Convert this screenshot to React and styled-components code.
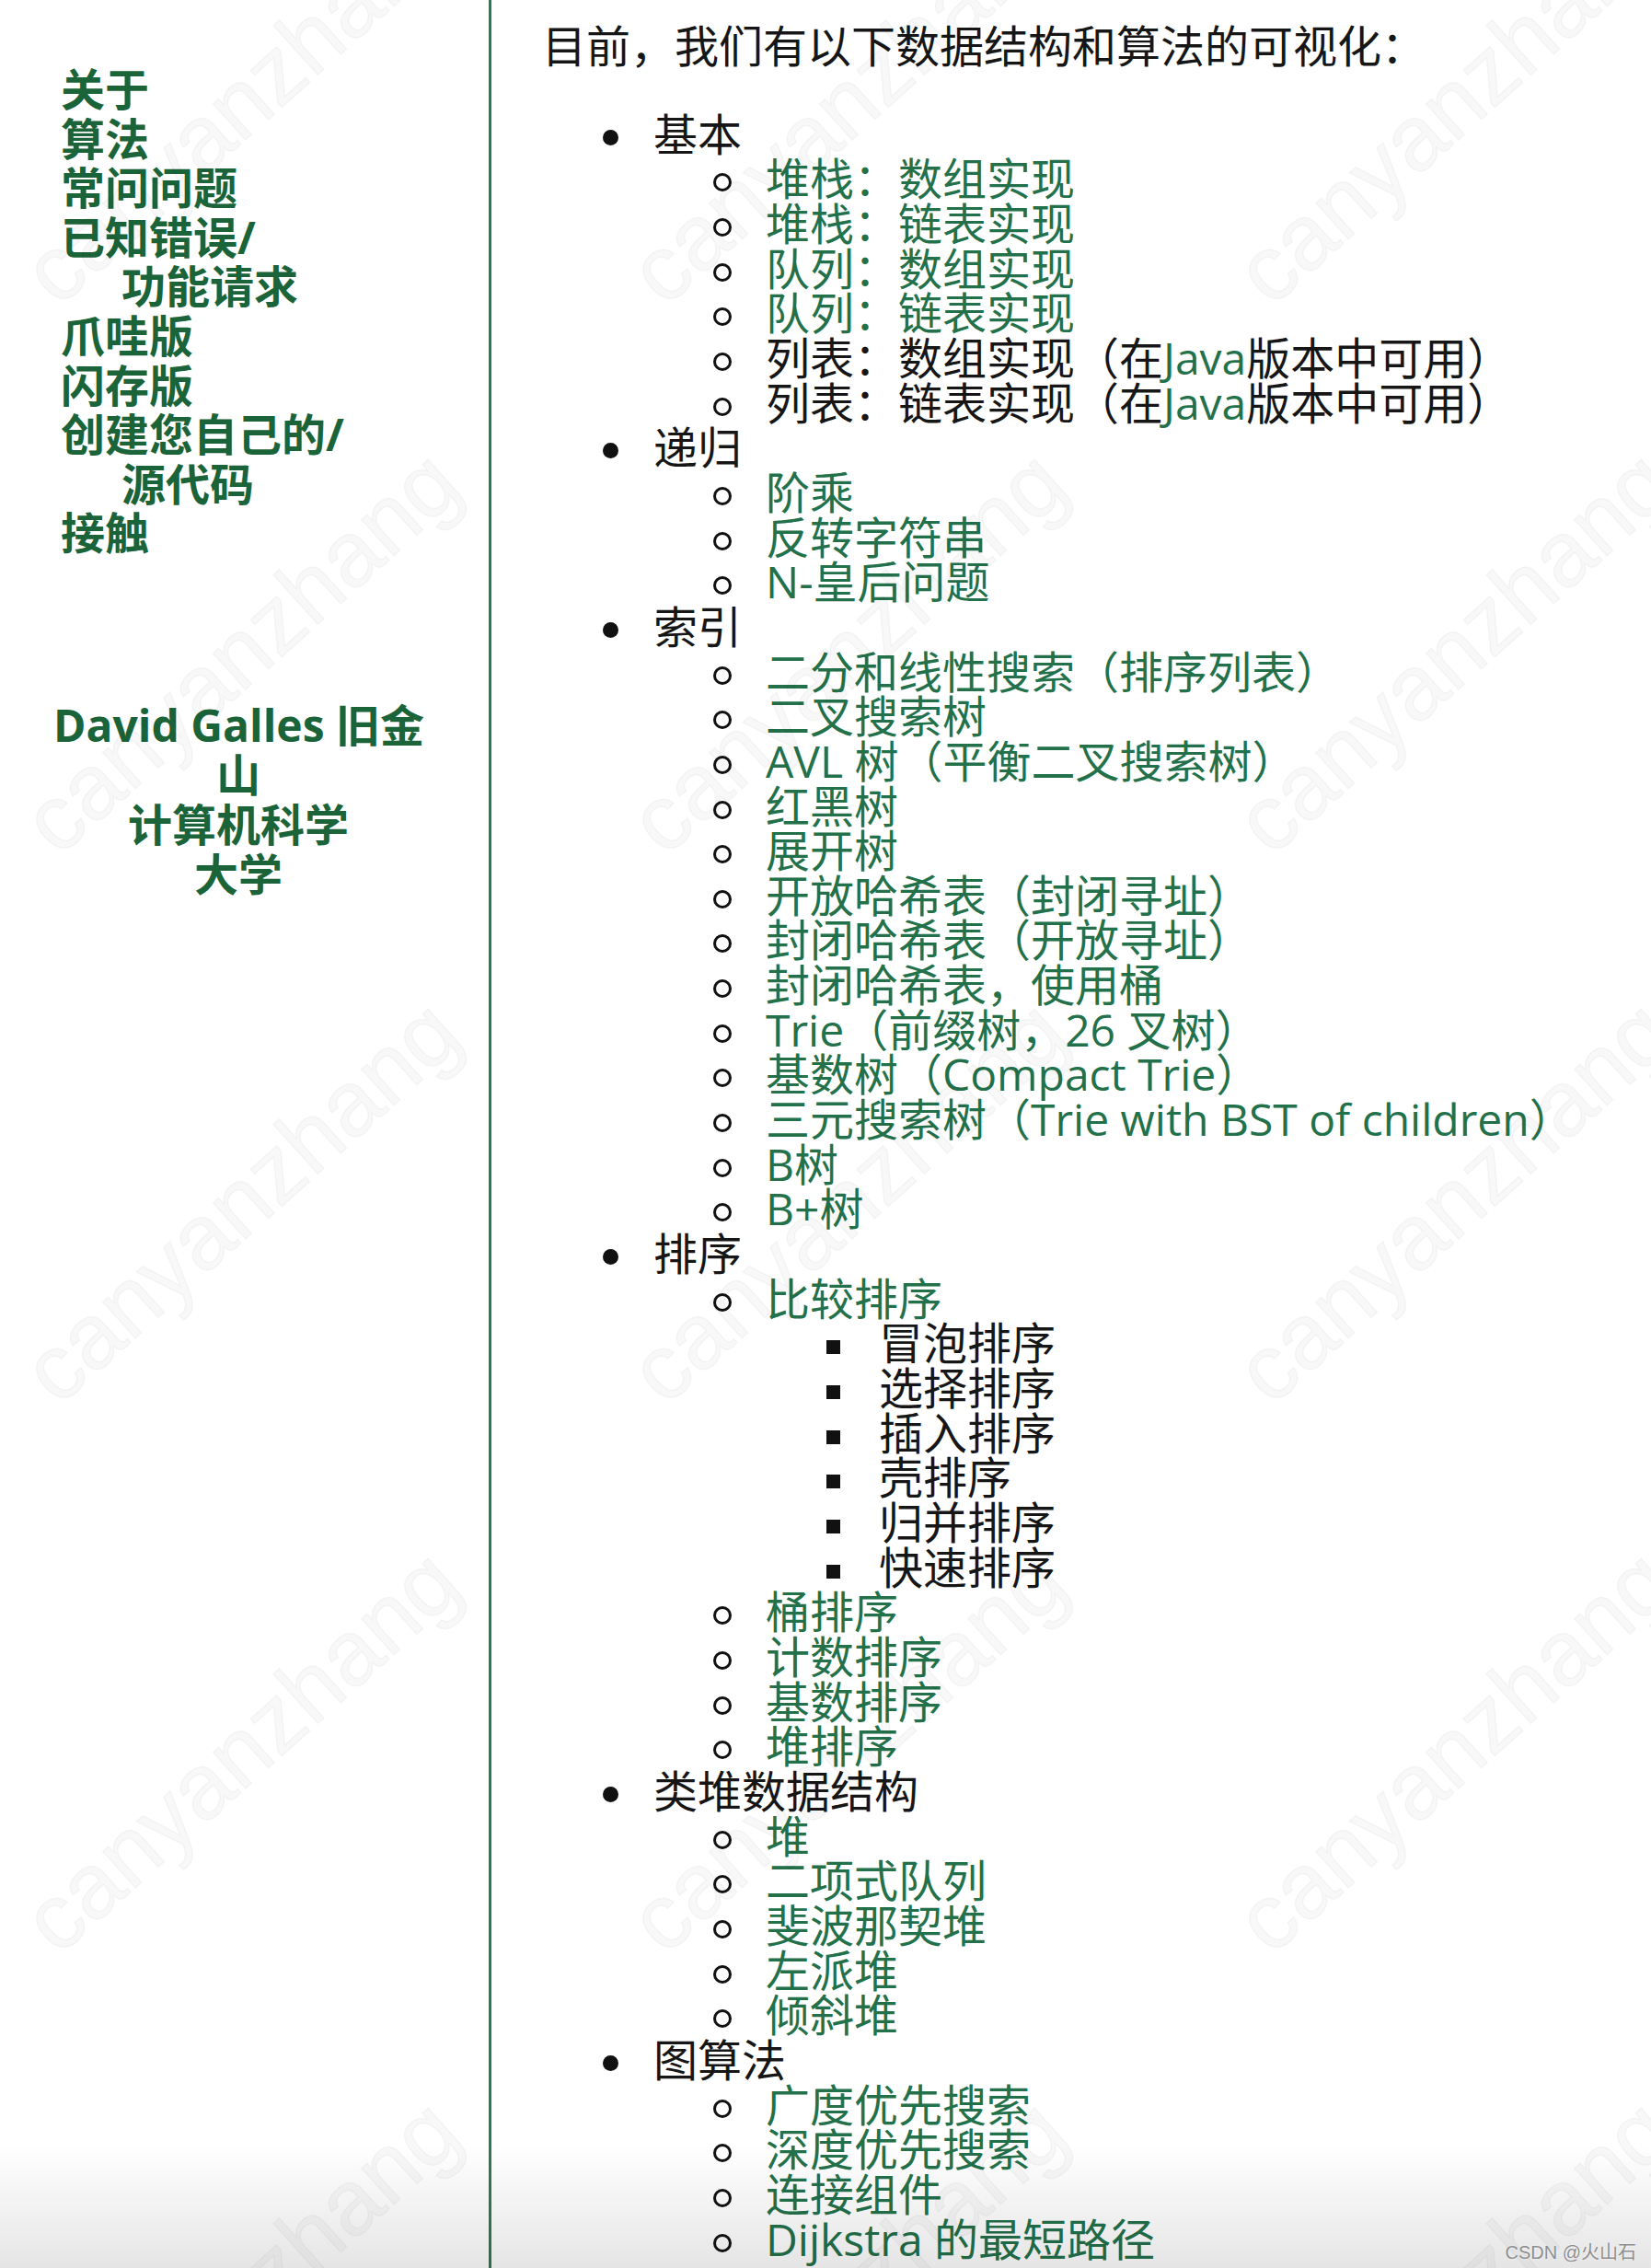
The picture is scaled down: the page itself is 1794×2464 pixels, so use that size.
import React from "react";
import styled, { createGlobalStyle } from "styled-components";

const GlobalStyle = createGlobalStyle`
  html, body { margin: 0; padding: 0; background: #ffffff; }
  body { font-family: "Open Sans", "Noto Sans CJK SC", sans-serif; }
`;

const NAV_GREEN = "#1b6439";
const LINK_GREEN = "#23714b";
const TEXT = "#161616";

const Page = styled.div`
  position: relative;
  display: flex;
  width: 1794px;
  height: 2464px;
  overflow: hidden;
  background: #fff;
`;

const Sidebar = styled.aside`
  flex: 0 0 531px;
  border-right: 3px solid #2c7a55;
  padding-top: 70px;
  box-sizing: content-box;
`;

const NavList = styled.nav`
  display: flex;
  flex-direction: column;
  padding-left: 66px;
`;

const NavLink = styled.a`
  display: block;
  color: ${NAV_GREEN};
  font-weight: 700;
  font-size: 48px;
  line-height: 53.6px;
  text-decoration: none;
  white-space: nowrap;
`;

const NavLine = styled.span`
  display: block;
  padding-left: ${(p) => (p.$cont ? "66px" : "0")};
`;

const Credit = styled.div`
  margin: 155px 0 0 58px;
  width: 402px;
  text-align: center;
  color: ${NAV_GREEN};
  font-weight: 700;
  font-size: 48px;
  line-height: 54px;
`;

const CreditLine = styled.span`
  display: block;
  white-space: nowrap;
`;

const Main = styled.main`
  flex: 1;
  padding: 26px 0 0 55px;
  color: ${TEXT};
  font-size: 48px;
  line-height: 48.66px;
`;

const Intro = styled.p`
  margin: 0 0 47px;
  white-space: nowrap;
`;

const List = styled.ul`
  list-style: none;
  margin: 0;
  padding-left: ${(p) => p.$indent}px;
`;

const markers = {
  disc: `
    width: 17px; height: 17px; border-radius: 50%;
    background: #111; left: -55.5px; top: 19px;
  `,
  circle: `
    width: 20px; height: 20px; border-radius: 50%;
    border: 3px solid #111; box-sizing: border-box;
    left: -57px; top: 18px;
  `,
  square: `
    width: 15px; height: 15px; background: #111;
    left: -57.5px; top: 21px;
  `,
};

const Item = styled.li`
  position: relative;
  white-space: nowrap;
  &::before {
    content: "";
    position: absolute;
    ${(p) => markers[p.$marker]}
  }
`;

const Link = styled.a`
  color: ${LINK_GREEN};
  text-decoration: none;
`;

const Plain = styled.span`
  color: ${TEXT};
`;

const WatermarkLayer = styled.div`
  position: absolute;
  top: -188px;
  left: -68px;
  display: grid;
  grid-template-columns: repeat(3, 659px);
  grid-auto-rows: 597px;
  pointer-events: none;
  z-index: 2;
`;

const Mark = styled.div`
  display: flex;
  align-items: center;
  justify-content: center;
  font-family: "Liberation Sans", sans-serif;
  font-size: 100px;
  color: rgba(0, 0, 0, 0.028);
  -webkit-text-stroke: 1.5px rgba(0, 0, 0, 0.035);
  transform: rotate(-42deg);
  white-space: nowrap;
`;

const BottomFade = styled.div`
  position: absolute;
  left: 0;
  right: 0;
  bottom: 0;
  height: 130px;
  display: flex;
  align-items: flex-end;
  justify-content: flex-end;
  padding: 0 16px 4px 0;
  background: linear-gradient(to bottom, rgba(0, 0, 0, 0), rgba(0, 0, 0, 0.1));
  pointer-events: none;
  z-index: 3;
`;

const Signature = styled.span`
  font-family: "Liberation Sans", "Noto Sans CJK SC", sans-serif;
  font-size: 20px;
  line-height: 26px;
  color: #8d8d8d;
  text-shadow: 0 0 2px #fff;
`;

const navItems = [
  ["关于"],
  ["算法"],
  ["常问问题"],
  ["已知错误/", "功能请求"],
  ["爪哇版"],
  ["闪存版"],
  ["创建您自己的/", "源代码"],
  ["接触"],
];

const javaNote = (head) => [
  [head + "（在", false],
  ["Java", true],
  ["版本中可用）", false],
];

const sections = [
  {
    label: "基本",
    items: [
      { t: "堆栈：数组实现" },
      { t: "堆栈：链表实现" },
      { t: "队列：数组实现" },
      { t: "队列：链表实现" },
      { parts: javaNote("列表：数组实现") },
      { parts: javaNote("列表：链表实现") },
    ],
  },
  {
    label: "递归",
    items: [{ t: "阶乘" }, { t: "反转字符串" }, { t: "N-皇后问题" }],
  },
  {
    label: "索引",
    items: [
      { t: "二分和线性搜索（排序列表）" },
      { t: "二叉搜索树" },
      { t: "AVL 树（平衡二叉搜索树）" },
      { t: "红黑树" },
      { t: "展开树" },
      { t: "开放哈希表（封闭寻址）" },
      { t: "封闭哈希表（开放寻址）" },
      { t: "封闭哈希表，使用桶" },
      { t: "Trie（前缀树，26 叉树）" },
      { t: "基数树（Compact Trie）" },
      { t: "三元搜索树（Trie with BST of children）" },
      { t: "B树" },
      { t: "B+树" },
    ],
  },
  {
    label: "排序",
    items: [
      {
        t: "比较排序",
        sub: ["冒泡排序", "选择排序", "插入排序", "壳排序", "归并排序", "快速排序"],
      },
      { t: "桶排序" },
      { t: "计数排序" },
      { t: "基数排序" },
      { t: "堆排序" },
    ],
  },
  {
    label: "类堆数据结构",
    items: [
      { t: "堆" },
      { t: "二项式队列" },
      { t: "斐波那契堆" },
      { t: "左派堆" },
      { t: "倾斜堆" },
    ],
  },
  {
    label: "图算法",
    items: [
      { t: "广度优先搜索" },
      { t: "深度优先搜索" },
      { t: "连接组件" },
      { t: "Dijkstra 的最短路径" },
    ],
  },
];

function SubItem({ item }) {
  return (
    <Item $marker="circle">
      {item.parts ? (
        item.parts.map(([text, link], i) =>
          link ? <Link key={i} href="#">{text}</Link> : <Plain key={i}>{text}</Plain>
        )
      ) : (
        <Link href="#">{item.t}</Link>
      )}
      {item.sub && (
        <List $indent={123}>
          {item.sub.map((s) => (
            <Item key={s} $marker="square">
              <Plain>{s}</Plain>
            </Item>
          ))}
        </List>
      )}
    </Item>
  );
}

export default function App() {
  return (
    <>
      <GlobalStyle />
      <Page>
        <Sidebar>
          <NavList>
            {navItems.map((lines) => (
              <NavLink key={lines[0]} href="#">
                {lines.map((l, i) => (
                  <NavLine key={l} $cont={i > 0}>
                    {l}
                  </NavLine>
                ))}
              </NavLink>
            ))}
          </NavList>
          <Credit>
            <CreditLine>David Galles 旧金</CreditLine>
            <CreditLine>山</CreditLine>
            <CreditLine>计算机科学</CreditLine>
            <CreditLine>大学</CreditLine>
          </Credit>
        </Sidebar>
        <Main>
          <Intro>目前，我们有以下数据结构和算法的可视化：</Intro>
          <List $indent={121}>
            {sections.map((sec) => (
              <Item key={sec.label} $marker="disc">
                {sec.label}
                <List $indent={122}>
                  {sec.items.map((it, i) => (
                    <SubItem key={i} item={it} />
                  ))}
                </List>
              </Item>
            ))}
          </List>
        </Main>
        <WatermarkLayer>
          {Array.from({ length: 15 }).map((_, i) => (
            <Mark key={i}>canyanzhang</Mark>
          ))}
        </WatermarkLayer>
        <BottomFade>
          <Signature>CSDN @火山石</Signature>
        </BottomFade>
      </Page>
    </>
  );
}
